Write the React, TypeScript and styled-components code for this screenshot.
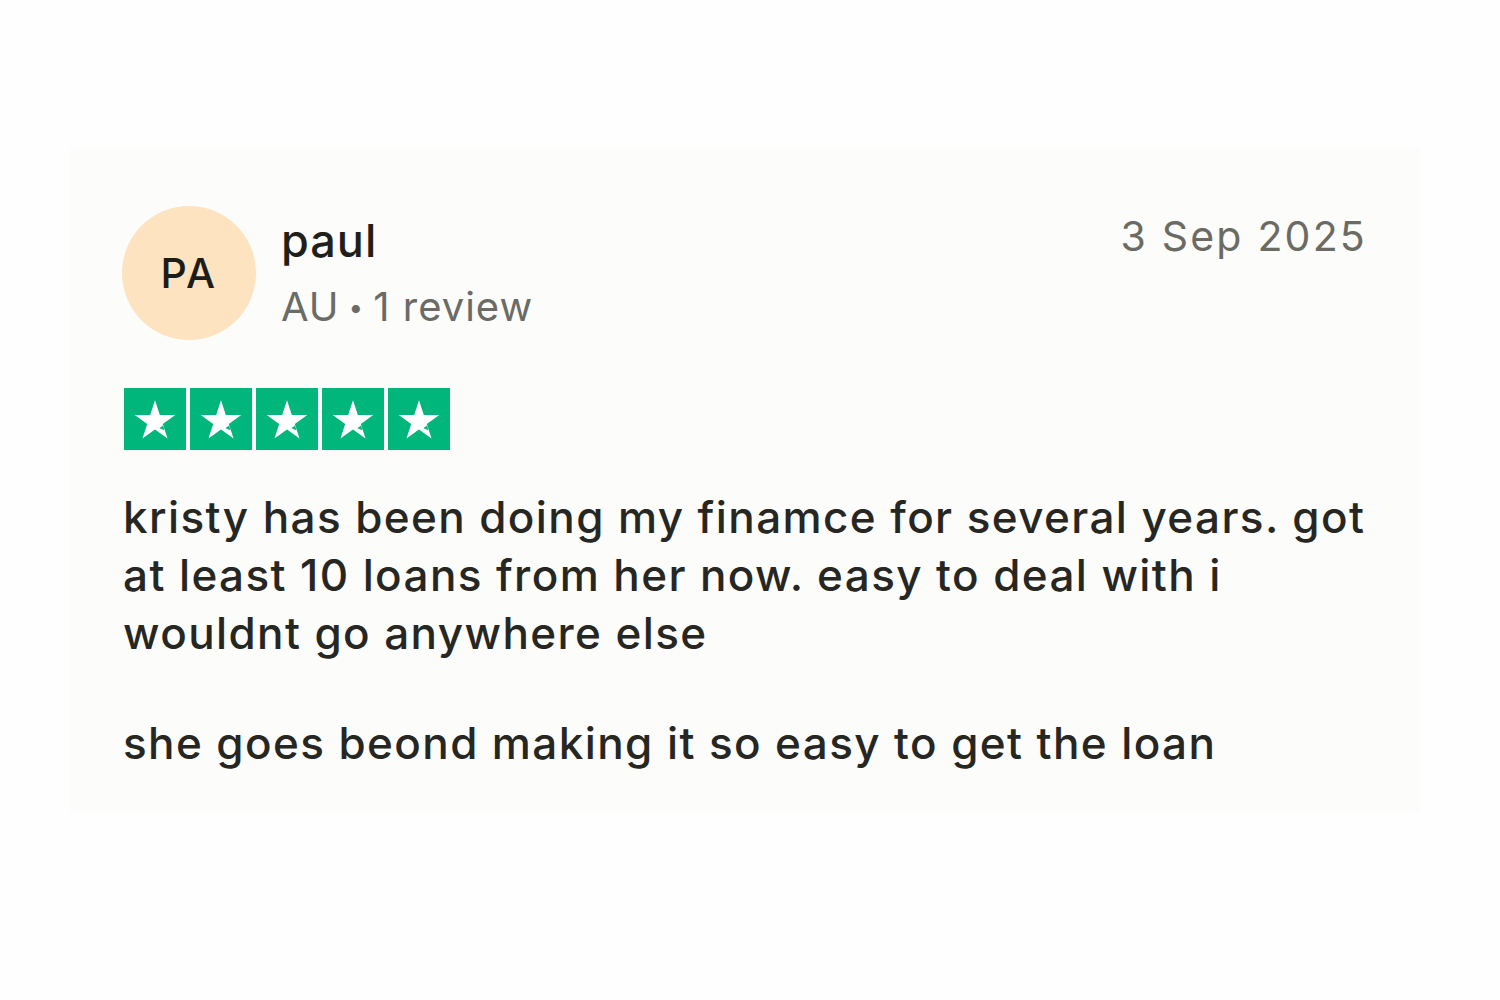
import React from 'react';
import styled, { createGlobalStyle } from 'styled-components';

const GlobalStyle = createGlobalStyle`
    html, body {
        margin: 0;
        padding: 0;
        background: #fefefe;
    }
    body {
        font-family: Inter, "Liberation Sans", sans-serif;
        -webkit-font-smoothing: antialiased;
    }
`;

const Page = styled.div`
    width: 1500px;
    height: 1000px;
    box-sizing: border-box;
    padding: 148px 80px 0 70px;
`;

const Card = styled.div`
    background: #fcfcfb;
    height: 664px;
    box-sizing: border-box;
    padding: 58px 40px 0 53px;
    display: flex;
    flex-direction: column;
`;

const Header = styled.div`
    display: flex;
    justify-content: space-between;
    align-items: flex-start;
    margin-right: 13px;
`;

const Consumer = styled.div`
    display: flex;
    align-items: center;
    gap: 25px;
`;

const Avatar = styled.div`
    width: 134px;
    height: 134px;
    margin-left: -1px;
    border-radius: 50%;
    background: #fde3bf;
    color: #1c1c1a;
    display: flex;
    align-items: center;
    justify-content: center;
    font-size: 41px;
    font-weight: 500;
    letter-spacing: 2.5px;
`;

const Info = styled.div`
    display: flex;
    flex-direction: column;
    gap: 8px;
`;

const Name = styled.div`
    font-size: 45px;
    font-weight: 500;
    color: #1f1f1c;
    line-height: 60px;
    letter-spacing: 1px;
`;

const Meta = styled.div`
    font-size: 40px;
    color: #6b6b66;
    line-height: 56px;
    letter-spacing: 1px;
`;

const Dot = styled.span`
    font-size: 26px;
    margin: 0 9px;
    vertical-align: 4px;
`;

const DateText = styled.time`
    font-size: 41px;
    color: #6b6b64;
    letter-spacing: 2.2px;
    line-height: 56px;
    margin-top: 2px;
`;

const Stars = styled.div`
    display: flex;
    gap: 4px;
    margin-top: 48px;
    padding-left: 1px;
`;

const StarBox = styled.div`
    width: 62px;
    height: 62px;
    background: #00b67a;
    display: flex;
    align-items: center;
    justify-content: center;
`;

const Body = styled.p<{ $gap?: number }>`
    margin: ${(p) => p.$gap ?? 0}px 0 0 0;
    font-size: 44px;
    font-weight: 500;
    line-height: 58px;
    letter-spacing: 1.4px;
    color: #262622;
`;

const Star = () => (
    <StarBox>
        <svg width="44" height="44" viewBox="0 0 40 40">
            <path
                d="M20 3 L24.4 16.3 L38.4 16.3 L27.1 24.5 L31.4 37.8 L20 29.6 L8.6 37.8 L12.9 24.5 L1.6 16.3 L15.6 16.3 Z"
                fill="#fff"
            />
            <path d="M24 28.4 L27.3 26 L28.6 30.3 Z" fill="#00b67a" />
        </svg>
    </StarBox>
);

const App: React.FC = () => {
    return (
        <>
            <GlobalStyle />
            <Page>
                <Card>
                    <Header>
                        <Consumer>
                            <Avatar>PA</Avatar>
                            <Info>
                                <Name>paul</Name>
                                <Meta>
                                    AU<Dot>•</Dot>1 review
                                </Meta>
                            </Info>
                        </Consumer>
                        <DateText>3 Sep 2025</DateText>
                    </Header>
                    <Stars>
                        {[0, 1, 2, 3, 4].map((i) => (
                            <Star key={i} />
                        ))}
                    </Stars>
                    <Body $gap={38}>
                        kristy has been doing my finamce for several years. got at least 10 loans from her now. easy to deal with i wouldnt go anywhere else
                    </Body>
                    <Body $gap={52}>she goes beond making it so easy to get the loan</Body>
                </Card>
            </Page>
        </>
    );
};

export default App;
